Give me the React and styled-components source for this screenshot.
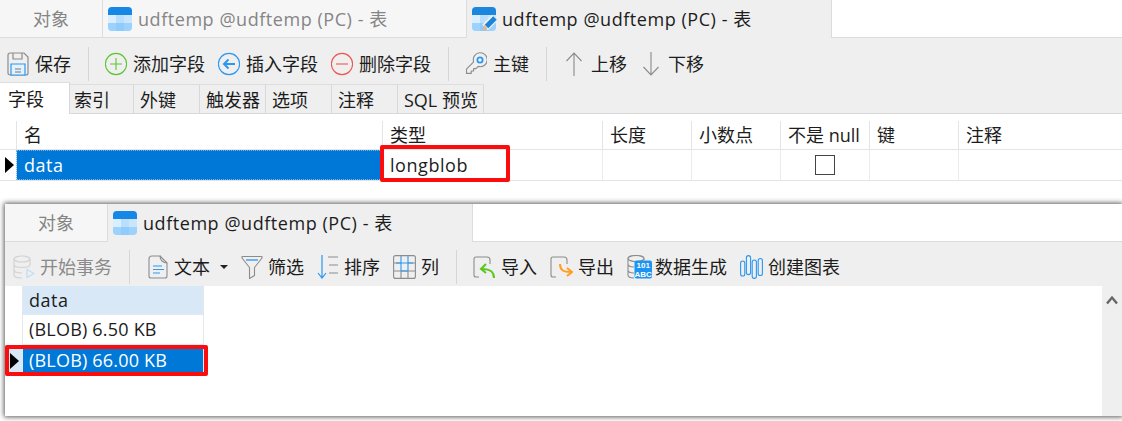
import React from 'react';
import styled, { createGlobalStyle } from 'styled-components';

const GlobalStyle = createGlobalStyle`
  html, body {
    margin: 0;
    padding: 0;
    background: #fff;
    overflow: hidden;
  }
  body {
    font-family: "Open Sans", "Noto Sans CJK SC", sans-serif;
    font-size: 18px;
    color: #1c1c1c;
  }
`;

const Page = styled.div`
  width: 1122px;
  height: 421px;
  overflow: hidden;
  background: #fff;
`;

// tab strip
const TabStrip = styled.div`
  display: flex;
  height: 37px;
  border-bottom: 1px solid #dcdcdc;
  background: #fff;
`;

const Tab = styled.div`
  box-sizing: border-box;
  display: flex;
  align-items: center;
  gap: 6px;
  width: ${p => p.$w}px;
  height: ${p => (p.$active ? '38px' : '37px')};
  padding-left: ${p => (p.$center ? 0 : 5)}px;
  justify-content: ${p => (p.$center ? 'center' : 'flex-start')};
  background: ${p => (p.$active ? '#efefef' : '#f6f6f6')};
  color: ${p => (p.$active ? '#1c1c1c' : '#858585')};
  border-right: 1px solid #dcdcdc;
  letter-spacing: ${p => (p.$center ? 0 : 0.55)}px;
  line-height: 1;
  white-space: nowrap;
`;

// toolbars
const Toolbar = styled.div`
  display: flex;
  align-items: center;
  gap: 13px;
  box-sizing: border-box;
  height: ${p => p.$h}px;
  padding: ${p => p.$top}px 0 0 ${p => p.$pad}px;
  background: #efefef;
`;

const ToolButton = styled.div`
  display: flex;
  align-items: center;
  gap: ${p => p.$gap}px;
  color: ${p => (p.$off ? '#8a8a8a' : '#1c1c1c')};
  line-height: 1;
  white-space: nowrap;
`;

const Divider = styled.div`
  width: 1px;
  height: 34px;
  margin: 0 3px 0 4px;
  background: #d6d6d6;
`;

const Caret = styled.span`
  width: 0;
  height: 0;
  margin-left: 5px;
  border-left: 4px solid transparent;
  border-right: 4px solid transparent;
  border-top: 4px solid #222;
`;

// sub tabs
const SubTabs = styled.div`
  display: flex;
  align-items: flex-end;
  height: 30px;
  background: #efefef;
  border-bottom: 1px solid #d8d8d8;
  box-sizing: border-box;
`;

const SubTab = styled.div`
  box-sizing: border-box;
  width: ${p => p.$w}px;
  height: ${p => (p.$active ? '32px' : '29px')};
  margin-top: ${p => (p.$active ? '-3px' : '0')};
  margin-bottom: ${p => (p.$active ? '-1px' : '0')};
  padding: ${p => (p.$active ? '0' : '2px')} 0 0 ${p => p.$left}px;
  display: flex;
  align-items: center;
  line-height: 1;
  background: ${p => (p.$active ? '#fff' : '#efefef')};
  border-right: 1px solid #d8d8d8;
  border-top: 1px solid #dedede;
  white-space: nowrap;
`;

// design grid
const FieldTable = styled.div`
  margin-top: 7px;
`;

const FieldRow = styled.div`
  display: grid;
  grid-template-columns: 16px 366px 220px 89px 89px 89px 89px 164px;
  height: ${p => p.$h}px;
  box-sizing: border-box;
  border-bottom: 1px solid #e4e4e4;
`;

const HeadCell = styled.div`
  box-sizing: border-box;
  padding-left: 7px;
  border-left: ${p => (p.$first ? 'none' : '1px solid #e4e4e4')};
  display: flex;
  align-items: center;
  line-height: 1;
  white-space: nowrap;
`;

const Cell = styled.div`
  position: relative;
  box-sizing: border-box;
  padding-left: 7px;
  border-left: ${p => (p.$first ? 'none' : '1px solid #ececec')};
  display: flex;
  align-items: center;
  justify-content: ${p => (p.$center ? 'center' : 'flex-start')};
  line-height: 1;
  letter-spacing: 0.55px;
  background: ${p => (p.$selected ? '#0078d7' : '#fff')};
  color: ${p => (p.$selected ? '#fff' : '#1c1c1c')};
  outline: ${p => (p.$selected ? '1px dotted #7fb4e0' : 'none')};
  outline-offset: -1px;
`;

const Gutter = styled.div`
  display: flex;
  align-items: center;
  justify-content: center;
  box-sizing: border-box;
  padding-left: 2px;
  background: ${p => (p.$tint ? '#d8e8f6' : '#fff')};
`;

const Pointer = styled.span`
  width: 0;
  height: 0;
  border-top: 8px solid transparent;
  border-bottom: 8px solid transparent;
  border-left: 9px solid #000;
`;

const CheckBox = styled.span`
  width: 20px;
  height: 20px;
  box-sizing: border-box;
  border: 1px solid #444;
  background: #fff;
  margin-left: -7px;
`;

const RedMark = styled.div`
  position: absolute;
  box-sizing: border-box;
  left: ${p => p.$l}px;
  top: ${p => p.$t}px;
  width: ${p => p.$w}px;
  height: ${p => p.$h}px;
  border: 4px solid #fb0d0d;
  border-radius: 2px;
  pointer-events: none;
`;

// second window
const Win = styled.div`
  margin: 23px 0 0 5px;
  width: 1117px;
  height: 212px;
  box-shadow: 0 0 5px 1px rgba(0, 0, 0, 0.65);
  background: #fff;
  display: flex;
  flex-direction: column;
`;

const ResultArea = styled.div`
  flex: 1;
  display: flex;
  min-height: 0;
`;

const ResultGrid = styled.div`
  position: relative;
  flex: 1;
`;

const ResultRow = styled.div`
  display: grid;
  grid-template-columns: 17px 182px;
  height: ${p => p.$h}px;
`;

const ResultCell = styled.div`
  box-sizing: border-box;
  padding: 0 0 ${p => p.$lift}px 6px;
  display: flex;
  align-items: center;
  line-height: 1;
  white-space: nowrap;
  letter-spacing: ${p => (p.$head ? 0.5 : 0.2)}px;
  background: ${p => (p.$head ? '#d8e8f6' : p.$selected ? '#0078d7' : '#fff')};
  color: ${p => (p.$selected ? '#fff' : '#1c1c1c')};
  border-bottom: 1px solid ${p => (p.$selected ? '#0078d7' : '#e1e8ee')};
  border-right: 1px solid #e1e8ee;
  border-left: 1px solid #e1e8ee;
`;

const ScrollTrack = styled.div`
  width: 20px;
  background: #efefef;
  display: flex;
  justify-content: center;
  padding-top: 9px;
  box-sizing: border-box;
`;

// icons
const TableIcon = ({ pen }) => (
  <svg width={pen ? 25 : 24} height="24" viewBox={pen ? '0 0 25 24' : '0 0 24 24'} style={pen ? { marginRight: -1 } : undefined}>
    <rect width="24" height="24" rx="4" fill="#b9dffd" />
    <path d="M0 8h8v8H0z" fill="#d9eeff" />
    <path d="M16 8h8v8h-8z" fill="#c9e6fe" />
    <path d="M0 16h24v4a4 4 0 0 1-4 4H4a4 4 0 0 1-4-4z" fill="#9dd2fd" />
    <path d="M8 16h8v8H8z" fill="#8fcbfc" />
    <path d="M0 4a4 4 0 0 1 4-4h16a4 4 0 0 1 4 4v4H0z" fill={pen ? '#1c86dc' : '#1787e6'} />
    {pen && (
      <>
        <path d="M13 20.5 23 10.5" stroke="#efefef" strokeWidth="8" />
        <path d="M14.5 19.5 23 11" stroke="#1b84da" strokeWidth="5" />
        <path d="M10.5 23.5 12 18l3.5 3.5z" fill="#f0b27c" />
      </>
    )}
  </svg>
);

const SaveIcon = () => (
  <svg width="22" height="24" viewBox="0 0 22 24" fill="none">
    <path d="M3 1h14l4 4v16a2 2 0 0 1-2 2H3a2 2 0 0 1-2-2V3a2 2 0 0 1 2-2z" stroke="#8c8c8c" strokeWidth="1.2" />
    <path d="M6 1v6h9V1" stroke="#8c8c8c" strokeWidth="1.2" />
    <path d="M4 12h14v11H4z" fill="#e3f2fe" stroke="#2a97f0" strokeWidth="1.2" />
    <path d="M8 17h6M8 20h6" stroke="#777" />
  </svg>
);

const RoundIcon = ({ color, children }) => (
  <svg width="22" height="24" viewBox="0 0 22 24" fill="none">
    <circle cx="11" cy="12" r="10.6" stroke={color} strokeWidth="1.1" />
    {children}
  </svg>
);

const KeyIcon = () => (
  <svg width="22" height="24" viewBox="0 0 22 24" fill="none">
    <path d="M8.6 9.8a7 7 0 1 1 4.6 4.6L11 16.6H8.6V19H6.2v2.4H1.5v-4.2z" stroke="#8c8c8c" strokeWidth="1.1" strokeLinejoin="round" />
    <circle cx="15" cy="8" r="2.6" fill="#fff" stroke="#2a97f0" strokeWidth="1.8" />
  </svg>
);

const ArrowIcon = ({ down }) => (
  <svg width="22" height="26" viewBox="0 0 22 26" fill="none" style={down ? { transform: 'scaleY(-1)' } : undefined}>
    <path d="M11 25V2M3.5 10 11 2l7.5 8" stroke="#8a8a8a" strokeWidth="1.1" />
  </svg>
);

const DbIcon = () => (
  <svg width="22" height="24" viewBox="0 0 22 24" fill="none" stroke="#d2d2d2" strokeWidth="1.2">
    <ellipse cx="9" cy="4" rx="8" ry="3" />
    <path d="M1 4v16c0 2 3.5 3 8 3M17 4v6M1 9.5c0 2 4 3 8 3s8-1 8-3M1 15c0 2 4 3 8 3" />
    <path d="M14 14.5v8l7-4z" stroke="#bcdcf6" />
  </svg>
);

const DocIcon = () => (
  <svg width="23" height="24" viewBox="0 0 23 24" fill="none">
    <path d="M6 1h8c0 4 3 7 7 7v13a2 2 0 0 1-2 2H5a2 2 0 0 1-2-2V4a3 3 0 0 1 3-3z" stroke="#8c8c8c" strokeWidth="1.1" />
    <path d="M14 1l7 7" stroke="#8c8c8c" strokeWidth="1.1" />
    <path d="M7 11h9M7 14.5h11M7 18h7" stroke="#2a97f0" strokeWidth="1.2" />
  </svg>
);

const FilterIcon = () => (
  <svg width="22" height="24" viewBox="0 0 22 24" fill="none">
    <path d="M1 1.5h20v1.5l-7.5 9.5v8l-5 3v-11L1 3z" stroke="#8c8c8c" strokeWidth="1.1" strokeLinejoin="round" />
    <path d="M5 5h12" stroke="#2a97f0" strokeWidth="1.3" />
  </svg>
);

const SortIcon = () => (
  <svg width="22" height="26" viewBox="0 0 22 26" fill="none">
    <path d="M5 1v23M1 19l4 5 4-5" stroke="#2a97f0" strokeWidth="1.2" />
    <path d="M11 3h10M12 11h9M12 19h9" stroke="#8c8c8c" strokeWidth="1.1" />
  </svg>
);

const ColumnsIcon = () => (
  <svg width="23" height="24" viewBox="0 0 23 24" fill="none">
    <path d="M1 16h21M8 16v7M15 16v7M1 8h7M15 8h7" stroke="#8c8c8c" strokeWidth="1.1" />
    <path d="M8 1v15M15 1v15M8 8h7M3 8h17M8 16h7" stroke="#2a97f0" strokeWidth="1.1" />
    <rect x="0.6" y="0.6" width="21.8" height="22.8" rx="2" stroke="#8c8c8c" strokeWidth="1.1" />
  </svg>
);

const FrameArrowIcon = ({ color, out }) => (
  <svg width="23" height="24" viewBox="0 0 23 24" fill="none">
    <path d="M6 22H3a2 2 0 0 1-2-2V4a2 2 0 0 1 2-2h11a3 3 0 0 1 3 3v4" stroke="#8c8c8c" strokeWidth="1.1" />
    {out ? (
      <path d="M10 9c0 6 3 8 11 8M17 13l5 4-5 4" stroke={color} strokeWidth="2" />
    ) : (
      <path d="M21 23c0-6-3-9-12-9M13 9l-5 5 5 4" stroke={color} strokeWidth="2" />
    )}
  </svg>
);

const GenIcon = () => (
  <svg width="25" height="24" viewBox="0 0 25 24" fill="none">
    <ellipse cx="9" cy="3.5" rx="8" ry="3" stroke="#8c8c8c" strokeWidth="1.1" />
    <path d="M1 3.5V20c0 2 3 3 6 3M17 3.5V5M1 9c0 2 3 3 6 3M1 15c0 2 3 3 6 3" stroke="#8c8c8c" strokeWidth="1.1" />
    <rect x="7.5" y="5.5" width="17.5" height="18" rx="2" fill="#1c95f2" />
    <text x="16.2" y="13.3" fill="#fff" fontSize="8" fontWeight="700" textAnchor="middle" fontFamily="Liberation Sans">101</text>
    <text x="16.2" y="21.5" fill="#fff" fontSize="8" fontWeight="700" textAnchor="middle" fontFamily="Liberation Sans">ABC</text>
  </svg>
);

const ChartIcon = () => (
  <svg width="23" height="24" viewBox="0 0 23 24" fill="none" stroke="#2a97f0" strokeWidth="1.1">
    <rect x="0.6" y="6" width="4.2" height="15" rx="2.1" />
    <rect x="6.4" y="0.6" width="4.2" height="19" rx="2.1" />
    <rect x="12.2" y="5" width="4.2" height="18.4" rx="2.1" />
    <rect x="18.2" y="3.5" width="4.2" height="17" rx="2.1" />
  </svg>
);

const subTabs = [
  ['字段', 70, 8], ['索引', 64, 4], ['外键', 66, 6], ['触发器', 66, 6], ['选项', 66, 6], ['注释', 66, 6], ['SQL 预览', 86, 6],
];

const fieldCols = ['长度', '小数点', '不是 null', '键', '注释'];

function App() {
  return (
    <Page>
      <GlobalStyle />
      <TabStrip>
        <Tab $w={103} $center>对象</Tab>
        <Tab $w={364}><TableIcon />udftemp @udftemp (PC) - 表</Tab>
        <Tab $w={365} $active><TableIcon pen />udftemp @udftemp (PC) - 表</Tab>
      </TabStrip>
      <Toolbar $h={46} $pad={7} $top={5}>
        <ToolButton $gap={6}><SaveIcon />保存</ToolButton>
        <Divider />
        <ToolButton $gap={6}>
          <RoundIcon color="#5ac732"><path d="M11 6v12M5 12h12" stroke="#5ac732" strokeWidth="1.1" /></RoundIcon>添加字段
        </ToolButton>
        <ToolButton $gap={6}>
          <RoundIcon color="#2a97f0"><path d="M17 12H6M10.5 7.5 6 12l4.5 4.5" stroke="#2a97f0" strokeWidth="2" /></RoundIcon>插入字段
        </ToolButton>
        <ToolButton $gap={6}>
          <RoundIcon color="#f2554f"><path d="M5 12h12" stroke="#f2554f" strokeWidth="1.1" /></RoundIcon>删除字段
        </ToolButton>
        <Divider />
        <ToolButton $gap={6}><KeyIcon />主键</ToolButton>
        <Divider />
        <ToolButton $gap={6}><ArrowIcon />上移</ToolButton>
        <ToolButton $gap={6}><ArrowIcon down />下移</ToolButton>
      </Toolbar>
      <SubTabs>
        {subTabs.map(([name, w, left], i) => (
          <SubTab key={name} $w={w} $left={left} $active={i === 0}>{name}</SubTab>
        ))}
      </SubTabs>
      <FieldTable>
        <FieldRow $h={29}>
          <HeadCell $first />
          <HeadCell>名</HeadCell>
          <HeadCell>类型</HeadCell>
          {fieldCols.map(c => <HeadCell key={c}>{c}</HeadCell>)}
        </FieldRow>
        <FieldRow $h={31}>
          <Gutter><Pointer /></Gutter>
          <Cell $selected>data</Cell>
          <Cell>
            longblob
            <RedMark $l={-3} $t={-5} $w={130} $h={37} />
          </Cell>
          <Cell />
          <Cell />
          <Cell $center><CheckBox /></Cell>
          <Cell />
          <Cell />
        </FieldRow>
      </FieldTable>
      <Win>
        <TabStrip>
          <Tab $w={103} $center>对象</Tab>
          <Tab $w={365} $active><TableIcon />udftemp @udftemp (PC) - 表</Tab>
        </TabStrip>
        <Toolbar $h={44} $pad={8} $top={6}>
          <ToolButton $gap={5} $off><DbIcon />开始事务</ToolButton>
          <Divider />
          <ToolButton $gap={5}><DocIcon />文本<Caret /></ToolButton>
          <ToolButton $gap={5}><FilterIcon />筛选</ToolButton>
          <ToolButton $gap={5}><SortIcon />排序</ToolButton>
          <ToolButton $gap={5}><ColumnsIcon />列</ToolButton>
          <Divider />
          <ToolButton $gap={5}><FrameArrowIcon color="#5ac71e" />导入</ToolButton>
          <ToolButton $gap={5}><FrameArrowIcon color="#ff9d1c" out />导出</ToolButton>
          <ToolButton $gap={3}><GenIcon />数据生成</ToolButton>
          <ToolButton $gap={5}><ChartIcon />创建图表</ToolButton>
        </Toolbar>
        <ResultArea>
          <ResultGrid>
            <ResultRow $h={29}>
              <Gutter />
              <ResultCell $head $lift={0}>data</ResultCell>
            </ResultRow>
            <ResultRow $h={30}>
              <Gutter />
              <ResultCell $lift={2}>(BLOB) 6.50 KB</ResultCell>
            </ResultRow>
            <ResultRow $h={31}>
              <Gutter $tint><Pointer /></Gutter>
              <ResultCell $selected $lift={0}>(BLOB) 66.00 KB</ResultCell>
            </ResultRow>
            <RedMark $l={0} $t={59} $w={203} $h={31} />
          </ResultGrid>
          <ScrollTrack>
            <svg width="12" height="10" viewBox="0 0 12 10" fill="none">
              <path d="M1 8.5 6 2.5l5 6" stroke="#666" strokeWidth="2.4" />
            </svg>
          </ScrollTrack>
        </ResultArea>
      </Win>
    </Page>
  );
}

export default App;
